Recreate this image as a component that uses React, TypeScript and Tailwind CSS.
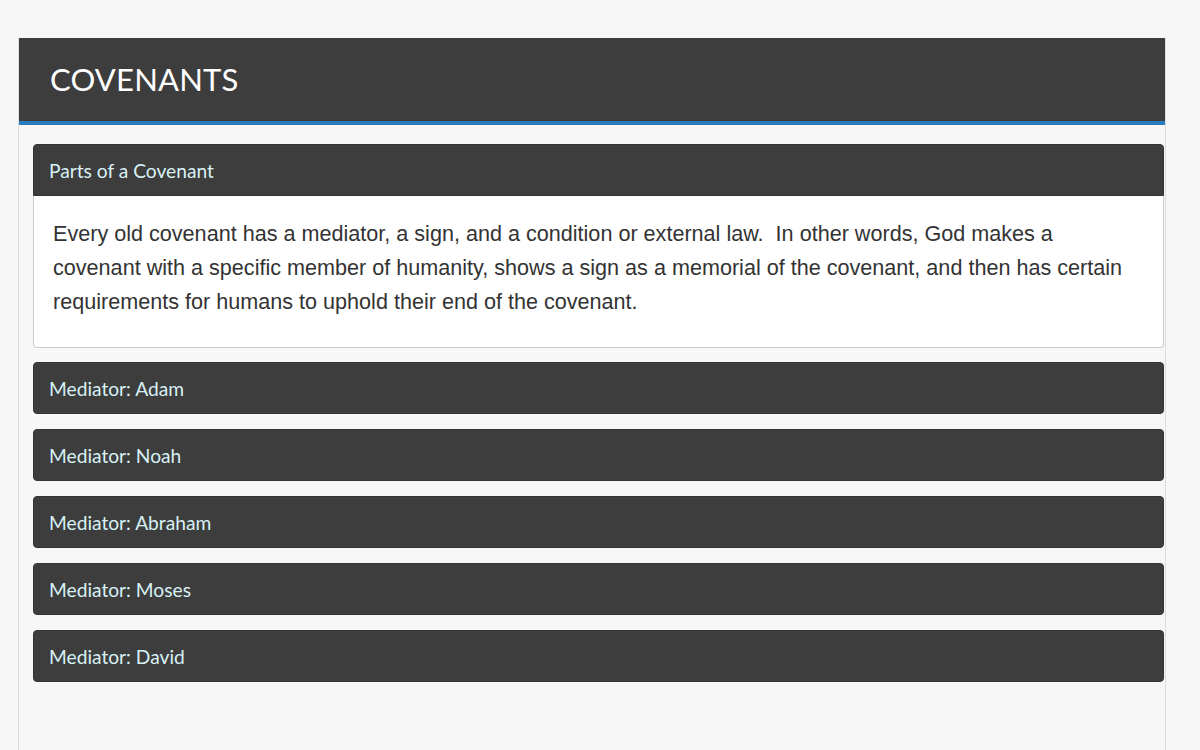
import React from 'react';

const mediators = ['Adam', 'Noah', 'Abraham', 'Moses', 'David'];

const Heading: React.FC<{ label: string; open?: boolean }> = ({ label, open }) => (
  <div
    className={`h-[52px] flex items-center px-[15px] bg-[#3d3d3d] border border-[#333333] text-[#d8f1f6] text-[19.2px] ${
      open ? 'rounded-t-[4px]' : 'rounded-[4px]'
    }`}
    style={{ fontFamily: 'Lato, "Open Sans", sans-serif' }}
  >
    <span className="translate-y-[1px]">{label}</span>
  </div>
);

export default function App() {
  return (
    <div className="min-h-[750px] bg-[#f7f7f7] pt-[38px] pl-[18px] pr-[34px]">
      <div className="min-h-[712px] border-x border-[#dddddd] bg-[#f7f7f7]">
        <div className="h-[83px] bg-[#3d3d3d] flex items-center pl-[31px]">
          <h1
            className="text-white text-[31px] tracking-[0.2px]"
            style={{ fontFamily: 'Lato, "Open Sans", sans-serif' }}
          >
            COVENANTS
          </h1>
        </div>
        <div className="h-[4px] bg-[#2a7bbb]" />

        <div className="pt-[19px] pl-[14px] pr-[1px] flex flex-col">
          <div className="mb-[14px]">
            <Heading label="Parts of a Covenant" open />
            <div className="bg-white border border-t-0 border-[#cccccc] rounded-b-[4px] pt-[21px] pb-[28px] px-[19px]">
              <p
                className="text-[#333333] text-[21.6px] leading-[34px]"
                style={{ fontFamily: '"Liberation Sans", Arial, sans-serif' }}
              >
                Every old covenant has a mediator, a sign, and a condition or external law.&nbsp; In other words, God makes a
                <br />
                covenant with a specific member of humanity, shows a sign as a memorial of the covenant, and then has certain
                <br />
                requirements for humans to uphold their end of the covenant.
              </p>
            </div>
          </div>
          {mediators.map((m) => (
            <div key={m} className="mb-[15px]">
              <Heading label={`Mediator: ${m}`} />
            </div>
          ))}
        </div>
      </div>
    </div>
  );
}
